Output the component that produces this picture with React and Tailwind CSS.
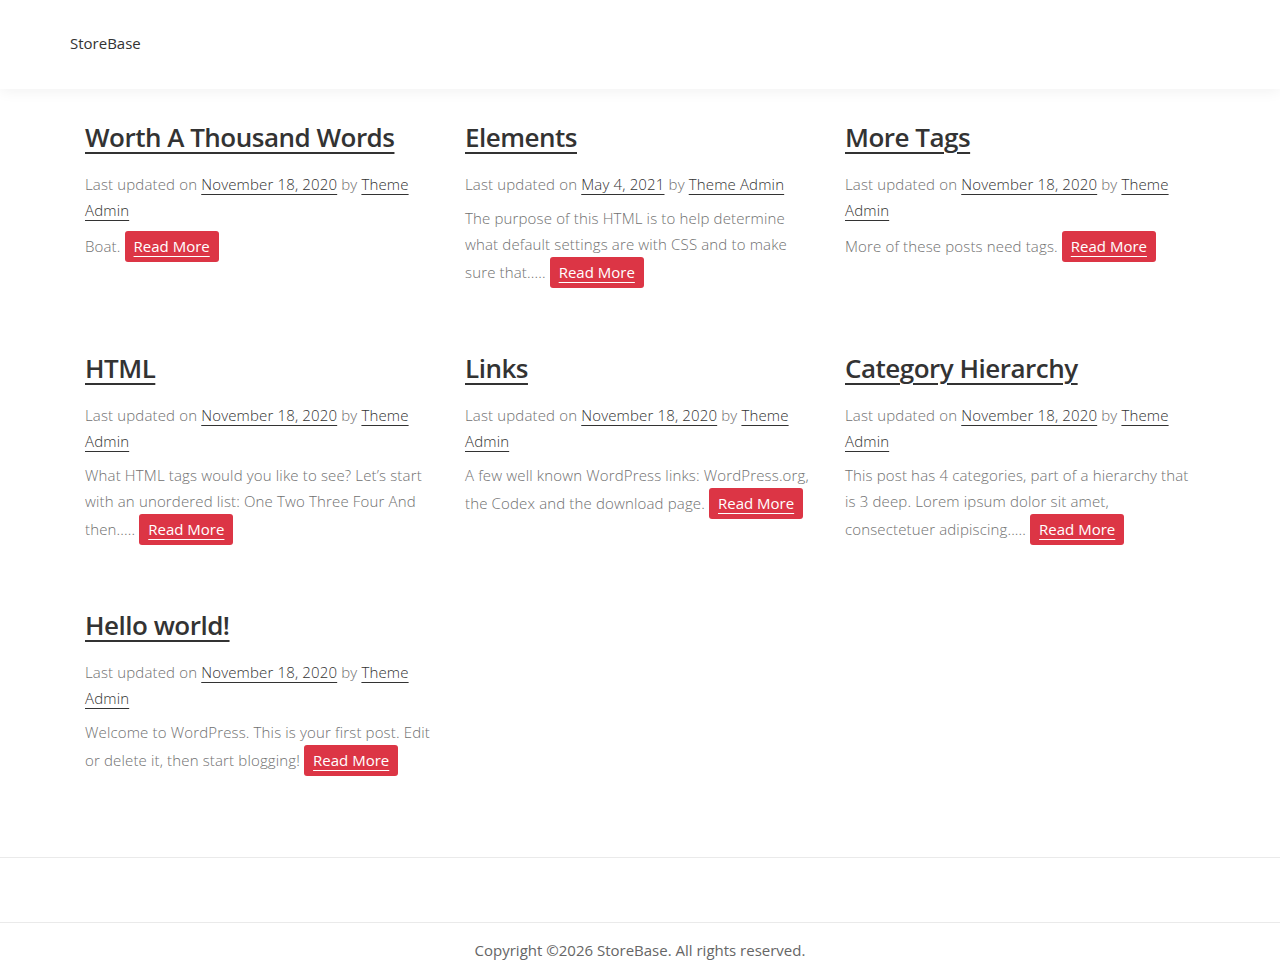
const posts = [
  {
    title: "Worth A Thousand Words",
    date: "November 18, 2020",
    excerpt: "Boat.",
  },
  {
    title: "Elements",
    date: "May 4, 2021",
    excerpt:
      "The purpose of this HTML is to help determine what default settings are with CSS and to make sure that.....",
  },
  {
    title: "More Tags",
    date: "November 18, 2020",
    excerpt: "More of these posts need tags.",
  },
  {
    title: "HTML",
    date: "November 18, 2020",
    excerpt:
      "What HTML tags would you like to see? Let’s start with an unordered list: One Two Three Four And then.....",
  },
  {
    title: "Links",
    date: "November 18, 2020",
    excerpt:
      "A few well known WordPress links: WordPress.org, the Codex and the download page.",
  },
  {
    title: "Category Hierarchy",
    date: "November 18, 2020",
    excerpt:
      "This post has 4 categories, part of a hierarchy that is 3 deep. Lorem ipsum dolor sit amet, consectetuer adipiscing.....",
  },
  {
    title: "Hello world!",
    date: "November 18, 2020",
    excerpt:
      "Welcome to WordPress. This is your first post. Edit or delete it, then start blogging!",
  },
];

function PostCard({ post }) {
  return (
    <article className="px-[15px] mb-[65px]">
      <h2 className="text-[26px] leading-[31px] font-semibold tracking-[-0.5px] text-[#333] mb-[18px]">
        <a href="#" className="underline decoration-2 underline-offset-[5px]">
          {post.title}
        </a>
      </h2>
      <div className="text-[15px] leading-[26px] tracking-[0.15px] text-[#707070] mb-[8px]">
        Last updated on{" "}
        <a href="#" className="text-[#333] underline underline-offset-[4px]">
          {post.date}
        </a>{" "}
        by{" "}
        <a href="#" className="text-[#333] underline underline-offset-[4px]">
          Theme Admin
        </a>
      </div>
      <p className="text-[15px] leading-[26px] tracking-[0.15px] text-[#707070]">
        {post.excerpt}{" "}
        <a
          href="#"
          className="inline-block bg-[#dc3545] text-white font-normal rounded-[3px] px-[9px] py-[2px] leading-[27px] tracking-normal underline underline-offset-[4px]"
        >
          Read More
        </a>
      </p>
    </article>
  );
}

export default function App() {
  return (
    <div
      className="min-h-screen bg-white font-light"
      style={{ fontFamily: '"Open Sans", "Liberation Sans", sans-serif' }}
    >
      <header className="bg-white h-[89px] shadow-[0_2px_14px_rgba(0,0,0,0.06)] relative z-10">
        <div className="max-w-[1140px] mx-auto h-full flex items-center pb-[2px]">
          <a href="#" className="text-[15px] font-normal text-[#333]">
            StoreBase
          </a>
        </div>
      </header>

      <main className="max-w-[1140px] mx-auto pt-[33px] pb-[16px]">
        <div className="grid grid-cols-3">
          {posts.map((p) => (
            <PostCard key={p.title} post={p} />
          ))}
        </div>
      </main>

      <footer>
        <div className="border-t border-[#eaeaea] h-[65px]" />
        <div className="border-t border-[#eaeaea] pt-[16px] pb-[20px] text-center text-[15px] leading-[22px] text-[#666] font-normal">
          Copyright ©2026 StoreBase. All rights reserved.
        </div>
      </footer>
    </div>
  );
}
